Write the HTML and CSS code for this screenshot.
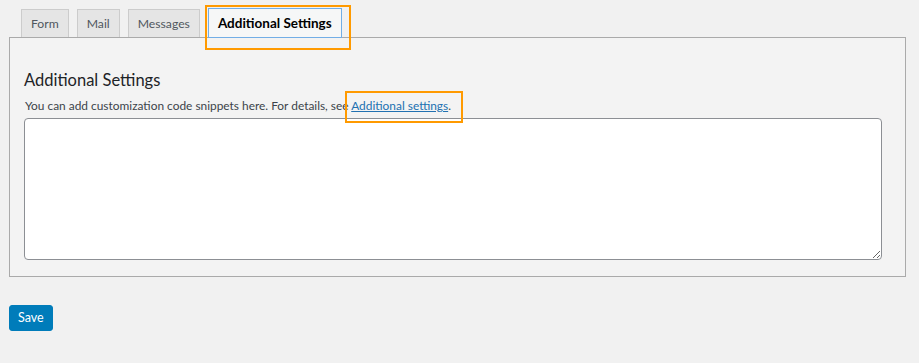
FILE: index.html
```html
<!DOCTYPE html>
<html>
<head>
<meta charset="utf-8">
<link rel="stylesheet" href="styles.css">
</head>
<body>
<div class="wrap">
  <nav class="tabs">
    <a class="tab">Form</a>
    <a class="tab">Mail</a>
    <a class="tab">Messages</a>
    <a class="tab active">Additional Settings<span class="hl hl-tab"></span></a>
  </nav>
  <section class="panel">
    <h2 class="title">Additional Settings</h2>
    <p class="desc">You can add customization code snippets here. For details, see <span class="linkwrap"><a class="link" href="#">Additional settings</a><span class="hl hl-link"></span></span>.</p>
    <textarea class="code"></textarea>
  </section>
  <div class="actions"><button class="save">Save</button></div>
</div>
</body>
</html>
```
FILE: styles.css
```css
html, body { margin: 0; background: #f1f1f1; }
body { font-family: Lato, "Open Sans", sans-serif; color: #3c434a; font-size: 12px; }
.wrap { padding: 9px 13px 0 9px; }
.tabs { display: flex; align-items: flex-end; gap: 8px; padding-left: 12px; height: 28px; position: relative; z-index: 1; }
.tab { box-sizing: border-box; height: 28px; padding: 0 9px; border: 1px solid #ccc; border-bottom: none; background: #e5e5e5; color: #50575e; font-size: 12.2px; line-height: 27px; text-decoration: none; }
.tab.active { position: relative; height: 30px; margin-bottom: -1px; margin-left: 0; background: #f6f7f7; border: 1px solid #72aee6; color: #000; font-weight: 700; font-size: 13.5px; line-height: 28px; }
.hl { position: absolute; border: 2px solid #ff9a00; pointer-events: none; }
.hl-tab { left: -4px; right: -10px; top: -4px; bottom: -13px; }
.panel { border: 1px solid #aaa; background: #f3f3f3; padding: 30px 23px 16px 14px; }
.title { margin: 0; font-size: 16.5px; font-weight: 400; color: #1d2327; line-height: 24px; }
.desc { margin: 5px 0 3px 1px; font-size: 11.9px; line-height: 18px; color: #3c434a; }
.linkwrap { position: relative; }
.link { color: #2271b1; text-decoration: underline; }
.hl-link { left: -6px; right: -15px; top: -7px; bottom: -10px; }
.code { display: block; box-sizing: border-box; width: 100%; height: 142px; border: 1px solid #8c8f94; border-radius: 4px; background: #fff; margin: 0; resize: vertical; }
.actions { padding-top: 28px; }
.save { font-family: inherit; font-size: 12.5px; background: #007cba; color: #fff; border: 1px solid #007cba; border-radius: 3px; height: 26px; padding: 0 8px; line-height: 24px; }
```
